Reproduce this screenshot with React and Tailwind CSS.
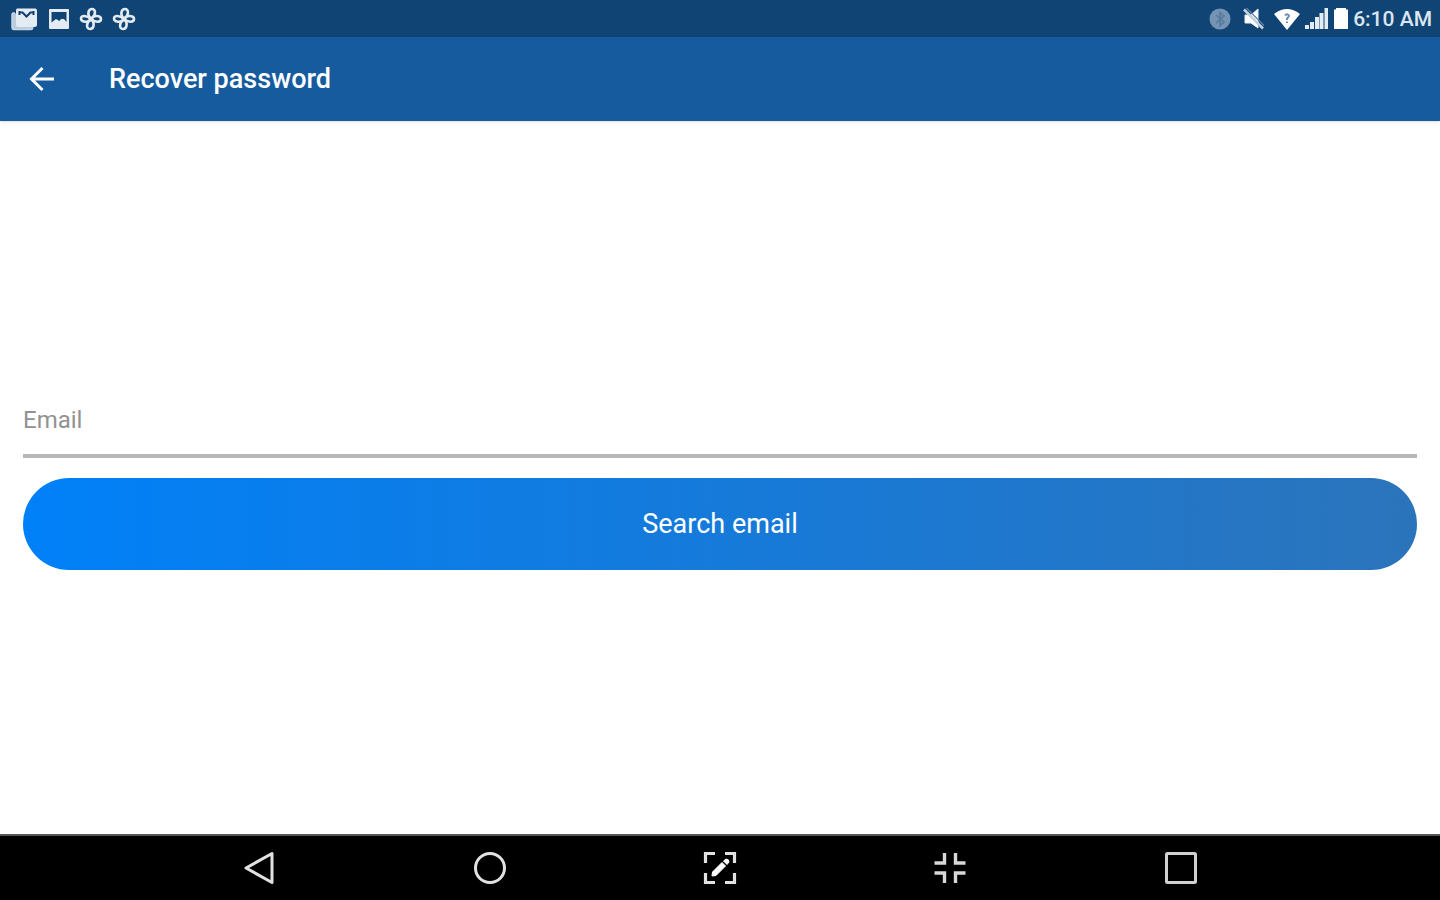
import { useState } from "react";

const PhotosIcon = () => (
  <svg width="28" height="24" viewBox="0 0 28 24" aria-hidden="true">
    <path d="M4 6H2.500q-1.500 0-1.500 1.500V20q0 2.500 2 2.500H20q1.500 0 2-2" fill="#b9cbdd" stroke="#c6d6e5" strokeWidth="1.500" />
    <path d="M6 1.500H24.500Q26 1.500 26 4V17.500Q26 20 23.500 20H6.500Q5 20 5 18V4Q5 1.500 6 1.500Z" fill="#e3ebf3" />
    <path d="M8.500 4V8M22.500 4V8M8.500 5L11.500 5.500L15.500 9.500L19.500 5.500L22.500 5" fill="none" stroke="#123f6d" strokeWidth="2" />
  </svg>
);

const PictureIcon = () => (
  <svg width="22" height="22" viewBox="0 0 22 22" aria-hidden="true">
    <rect x="1" y="1" width="20" height="20" rx="1" fill="#e3ebf3" />
    <path d="M3.500 4H18.500V14L16 11H13L11.500 13L8 11L3.500 14.500Z" fill="#104475" />
  </svg>
);

const PinwheelIcon = () => (
  <svg width="24" height="24" viewBox="0 0 24 24" fill="none" stroke="#e3ebf3" strokeWidth="2.600" aria-hidden="true">
    <path d="M11.500 11.500C8 8 9 2 13 2C17 2 17 8 12.500 11.500Z" />
    <path d="M12 12C15 7.500 22 8.500 22 12C22 15.500 16 16 12 12Z" />
    <path d="M12.500 12.500C16 16 15 22 11 22C7 22 7 16 11.500 12.500Z" />
    <path d="M12 12C9 16.500 2 15 2 11.500C2 8 8 8 12 12Z" />
  </svg>
);

const GlobeIcon = () => (
  <svg width="22" height="22" viewBox="0 0 22 22" aria-hidden="true">
    <circle cx="11" cy="11" r="10.500" fill="#7593b3" />
    <path d="M7 7L15 14L11 17.500V4.500L15 8L7 15" fill="none" stroke="#55799f" strokeWidth="1.600" />
  </svg>
);

const MutedIcon = () => (
  <svg width="22" height="22" viewBox="0 0 22 22" aria-hidden="true">
    <path d="M2 7H8L15 1V20L8 15H2Z" fill="#fff" stroke="#e9f0f6" strokeWidth="1" />
    <path d="M3.500 0L21 17.500" stroke="#5f81a5" strokeWidth="1.200" />
    <path d="M1 1.500L20 20.500" stroke="#c3d1df" strokeWidth="2.600" />
  </svg>
);

const WifiIcon = () => (
  <svg width="28" height="22" viewBox="0 0 28 22" aria-hidden="true">
    <path d="M1 6Q14-4 27 6L14 22Z" fill="#fff" />
    <path d="M12 7.500Q14 5 16 7.500Q16 9 14 10.500V12M14 13.500V15" fill="none" stroke="#6d8eae" strokeWidth="2" />
  </svg>
);

const SignalIcon = () => (
  <svg width="24" height="22" viewBox="0 0 24 22" fill="#e3ebf3" aria-hidden="true">
    <rect x="0" y="17" width="4" height="4" />
    <rect x="5" y="14" width="4" height="7" />
    <rect x="10" y="9" width="4" height="12" />
    <rect x="14.500" y="5" width="4" height="16" />
    <rect x="19.500" y="0" width="3.500" height="21" />
  </svg>
);

const BatteryIcon = () => (
  <svg width="16" height="22" viewBox="0 0 16 22" aria-hidden="true">
    <path d="M3 0H13V1.500H15V21H1V1.500H3Z" fill="#fff" />
  </svg>
);

const ArrowIcon = () => (
  <svg width="28" height="28" viewBox="0 0 28 28" fill="none" stroke="#fff" strokeWidth="3" aria-hidden="true">
    <path d="M26 14H4M14.500 3L3.500 14L14.500 25" />
  </svg>
);

const BackIcon = () => (
  <svg width="36" height="36" viewBox="0 0 36 36" fill="none" stroke="#e2e2e2" strokeWidth="3" strokeLinejoin="round" aria-hidden="true">
    <path d="M31 3.500V32.500L5 18Z" />
  </svg>
);

const HomeIcon = () => (
  <svg width="36" height="36" viewBox="0 0 36 36" fill="none" stroke="#e2e2e2" strokeWidth="3" aria-hidden="true">
    <circle cx="18" cy="18" r="14.500" />
  </svg>
);

const CaptureIcon = () => (
  <svg width="36" height="36" viewBox="0 0 36 36" fill="none" stroke="#e2e2e2" strokeWidth="3.200" aria-hidden="true">
    <path d="M3.500 13V3.500H13M23 3.500H32.500V13M32.500 23V32.500H23M13 32.500H3.500V23" />
    <path d="M10 26L10.500 22L20 12.500L23.500 16L14 25.500Z" fill="#fff" stroke="#fff" strokeWidth="1" />
    <path d="M21.500 11L24 9Q27 9 27 12L25 14.500Z" fill="#fff" stroke="#fff" strokeWidth="1" />
  </svg>
);

const CollapseIcon = () => (
  <svg width="36" height="36" viewBox="0 0 36 36" fill="none" stroke="#d8d8d8" strokeWidth="3.400" aria-hidden="true">
    <path d="M12.500 3V13H2.500M23.500 3V13H33.500M2.500 23H12.500V33M33.500 23H23.500V33" />
  </svg>
);

const RecentIcon = () => (
  <svg width="36" height="36" viewBox="0 0 36 36" fill="none" stroke="#d0d0d0" strokeWidth="3" aria-hidden="true">
    <rect x="3.500" y="3.500" width="29" height="29" rx="1" />
  </svg>
);

const navItems = [
  { label: "Back", Icon: BackIcon },
  { label: "Home", Icon: HomeIcon },
  { label: "Capture", Icon: CaptureIcon },
  { label: "Exit full screen", Icon: CollapseIcon },
  { label: "Recent apps", Icon: RecentIcon },
];

const StatusBar = () => (
  <div className="flex h-[37px] items-center justify-between bg-[#104475] pl-[11px] pr-2 text-white">
    <div className="flex items-center gap-[9px]">
      <PhotosIcon />
      <PictureIcon />
      <PinwheelIcon />
      <PinwheelIcon />
    </div>
    <div className="flex items-center gap-2">
      <div className="flex items-center gap-3">
        <GlobeIcon />
        <MutedIcon />
      </div>
      <div className="flex items-center gap-1">
        <WifiIcon />
        <SignalIcon />
        <BatteryIcon />
        <span className="text-[21px] leading-6 font-medium text-[#dce6f0]">6:10 AM</span>
      </div>
    </div>
  </div>
);

const App = () => {
  const [email, setEmail] = useState("");

  return (
    <div className="flex min-h-screen flex-col bg-white font-['Roboto',sans-serif]">
      <StatusBar />

      <header className="flex h-[84px] items-center gap-[53px] bg-[#165b9e] px-7 text-white shadow-sm">
        <button type="button" aria-label="Go back">
          <ArrowIcon />
        </button>
        <h1 className="text-[27px] leading-8 font-medium">Recover password</h1>
      </header>

      <main className="flex flex-1 flex-col justify-center px-[23px]">
        <form className="flex flex-col gap-5" onSubmit={(e) => e.preventDefault()}>
          <input
            type="email"
            aria-label="Email"
            placeholder="Email"
            value={email}
            onChange={(e) => setEmail(e.target.value)}
            className="h-[73px] w-full border-b-4 border-[#b7b7b7] text-2xl text-gray-800 outline-none placeholder:text-[#929292]"
          />
          <button
            type="submit"
            className="h-[92px] w-full rounded-full bg-linear-to-r/srgb from-[#0080f8] to-[#2b74bb] text-[27px] leading-8 text-white"
          >
            Search email
          </button>
        </form>
      </main>

      <nav className="grid h-[66px] grid-cols-5 border-t-2 border-[#555] bg-black px-[10%]">
        {navItems.map(({ label, Icon }) => (
          <button key={label} type="button" aria-label={label} className="flex items-center justify-center">
            <Icon />
          </button>
        ))}
      </nav>
    </div>
  );
};

export default App;
